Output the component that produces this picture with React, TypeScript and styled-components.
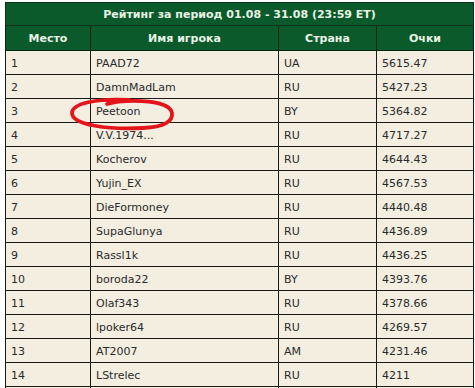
import React from "react";
import styled, { createGlobalStyle } from "styled-components";

const Global = createGlobalStyle`
  html, body { margin: 0; padding: 0; background: #ffffff; }
  body { font-family: "DejaVu Sans", Verdana, sans-serif; }
`;

const Wrap = styled.div`
  position: relative;
  padding: 2px 0 0 5px;
  height: 388px;
  overflow: hidden;
  box-sizing: border-box;
`;

const Table = styled.table`
  border-collapse: collapse;
  width: 468px;
  table-layout: fixed;
  font-size: 11px;
`;

const TitleCell = styled.th`
  background: #0b5a2b;
  color: #e9f3e4;
  font-weight: bold;
  font-size: 11px;
  height: 22px;
  padding: 0;
  text-align: center;
  border: 1px solid #10301c;
`;

const HeadCell = styled.th`
  background: #0b5a2b;
  color: #e9f3e4;
  font-weight: bold;
  font-size: 11px;
  height: 24px;
  padding: 0;
  text-align: center;
  border: 1px solid #0a2414;
`;

const Cell = styled.td`
  background: #f3eee0;
  color: #2a2a2a;
  height: 22px;
  padding: 1px 0 0 5px;
  text-align: left;
  border: 1px solid #1a1a1a;
  white-space: nowrap;
  overflow: hidden;
`;

const Ellipse = styled.svg`
  position: absolute;
  left: 67px;
  top: 95px;
  pointer-events: none;
`;

const rows: [string, string, string, string][] = [
  ["1", "PAAD72", "UA", "5615.47"],
  ["2", "DamnMadLam", "RU", "5427.23"],
  ["3", "Peetoon", "BY", "5364.82"],
  ["4", "V.V.1974...", "RU", "4717.27"],
  ["5", "Kocherov", "RU", "4644.43"],
  ["6", "Yujin_EX", "RU", "4567.53"],
  ["7", "DieFormoney", "RU", "4440.48"],
  ["8", "SupaGlunya", "RU", "4436.89"],
  ["9", "Rassl1k", "RU", "4436.25"],
  ["10", "boroda22", "BY", "4393.76"],
  ["11", "Olaf343", "RU", "4378.66"],
  ["12", "lpoker64", "RU", "4269.57"],
  ["13", "AT2007", "AM", "4231.46"],
  ["14", "LStrelec", "RU", "4211"],
  ["", "", "", ""],
];

export default function App() {
  return (
    <Wrap>
      <Global />
      <Table>
        <colgroup>
          <col style={{ width: 85 }} />
          <col style={{ width: 188 }} />
          <col style={{ width: 98 }} />
          <col style={{ width: 97 }} />
        </colgroup>
        <thead>
          <tr>
            <TitleCell colSpan={4}>Рейтинг за период 01.08 - 31.08 (23:59 ET)</TitleCell>
          </tr>
          <tr>
            <HeadCell>Место</HeadCell>
            <HeadCell>Имя игрока</HeadCell>
            <HeadCell>Страна</HeadCell>
            <HeadCell>Очки</HeadCell>
          </tr>
        </thead>
        <tbody>
          {rows.map((r, i) => (
            <tr key={i}>
              <Cell>{r[0]}</Cell>
              <Cell>{r[1]}</Cell>
              <Cell>{r[2]}</Cell>
              <Cell>{r[3]}</Cell>
            </tr>
          ))}
        </tbody>
      </Table>
      <Ellipse width="110" height="38" viewBox="0 0 110 38">
        <path
          d="M62 5 C32 3 5 8 5 18 C5 30 42 35 76 33 C98 32 106 26 105 18 C104 10 88 5 60 6 C52 6 46 7 40 9"
          fill="none"
          stroke="#e3151b"
          strokeWidth="3.8"
          strokeLinecap="round"
        />
      </Ellipse>
    </Wrap>
  );
}
